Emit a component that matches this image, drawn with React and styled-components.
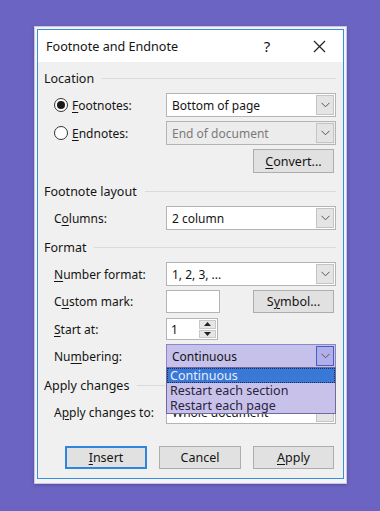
import React from "react";
import styled, { createGlobalStyle } from "styled-components";

const Global = createGlobalStyle`
  html, body { margin: 0; padding: 0; }
  body { background: #6c64c2; font-family: "Noto Sans", "Open Sans", Arial, sans-serif; }
`;

const Page = styled.div`
  width: 380px;
  height: 511px;
  background: #6c64c2;
  padding: 26px 0 0 34px;
  box-sizing: border-box;
`;

const Frame = styled.div`
  width: 313px;
  height: 458px;
  box-sizing: border-box;
  border: 1px solid #c9c7dc;
  background: #f4f4f4;
  padding: 2px 2px 4px 2px;
  box-shadow: 0 1px 3px rgba(40, 30, 90, 0.35);
`;

const Win = styled.div`
  height: 100%;
  box-sizing: border-box;
  border: 1px solid #3a8ee0;
  background: #f0f0f0;
  display: flex;
  flex-direction: column;
  color: #141414;
  font-size: 12px;
`;

const TitleBar = styled.div`
  height: 32px;
  background: #ffffff;
  display: flex;
  align-items: center;
  padding-left: 8px;
  padding-right: 2px;
  font-size: 12.6px;
  flex: none;
`;

const TitleText = styled.div`
  flex: 1;
`;

const TitleBtn = styled.div`
  width: ${(p) => p.$w}px;
  display: flex;
  justify-content: center;
  align-items: center;
  font-size: 15px;
`;

const Body = styled.div`
  padding: 8px 7px 0 6px;
  display: flex;
  flex-direction: column;
`;

const Header = styled.div`
  height: 16px;
  display: flex;
  align-items: center;
  gap: 8px;
  margin-top: ${(p) => p.$mt || 0}px;
  margin-bottom: 7px;
  font-size: 12.5px;
  &::after {
    content: "";
    flex: 1;
    height: 1px;
    background: #dadada;
  }
`;

const Row = styled.div`
  display: grid;
  grid-template-columns: 112px 1fr;
  align-items: center;
  height: ${(p) => p.$h || 24}px;
  margin-top: ${(p) => p.$mt || 0}px;
  padding-left: 10px;
`;

const Label = styled.div`
  display: flex;
  align-items: center;
  gap: 4px;
  white-space: nowrap;
`;

const U = styled.span`
  text-decoration: underline;
  text-underline-offset: 2px;
`;

const Radio = styled.span`
  width: 14px;
  height: 14px;
  box-sizing: border-box;
  border: 1px solid #333;
  border-radius: 50%;
  background: #fff;
  display: inline-flex;
  align-items: center;
  justify-content: center;
  &::after {
    content: "";
    width: 8px;
    height: 8px;
    border-radius: 50%;
    background: ${(p) => (p.$on ? "#1a1a1a" : "transparent")};
  }
`;

const SelectWrap = styled.div`
  position: relative;
  width: 170px;
  height: 24px;
`;

const Select = styled.div`
  height: 100%;
  box-sizing: border-box;
  border: 1px solid ${(p) => (p.$active ? "#8d88c4" : "#b4b4b4")};
  background: ${(p) => (p.$active ? "#c6c1ea" : p.$disabled ? "#ececec" : "#ffffff")};
  color: ${(p) => (p.$disabled ? "#7a7a7a" : "#141414")};
  display: flex;
  align-items: stretch;
  padding: 1px;
`;

const SelText = styled.div`
  flex: 1;
  display: flex;
  align-items: center;
  padding-left: 4px;
  white-space: nowrap;
  overflow: hidden;
`;

const Arrow = styled.div`
  width: 18px;
  box-sizing: border-box;
  border: 1px solid ${(p) => (p.$active ? "#3a64c8" : "#c4c4c4")};
  background: ${(p) => (p.$active ? "#b3aeea" : "#e4e4e4")};
  display: flex;
  align-items: center;
  justify-content: center;
`;

const Chevron = () => (
  <svg width="9" height="6" viewBox="0 0 9 6">
    <polyline points="0.5,0.8 4.5,4.8 8.5,0.8" fill="none" stroke="#555" strokeWidth="1" />
  </svg>
);

const DropList = styled.div`
  position: absolute;
  left: 0;
  top: 23px;
  width: 170px;
  box-sizing: border-box;
  border: 1px solid #6e6a9c;
  background: #c8c2ea;
  z-index: 2;
  padding: 0;
`;

const Item = styled.div`
  height: 15px;
  line-height: 15px;
  padding-left: 3px;
  font-size: 12.5px;
  background: ${(p) => (p.$sel ? "#3a78d6" : "transparent")};
  color: ${(p) => (p.$sel ? "#e8ecff" : "#2a2440")};
  outline: ${(p) => (p.$sel ? "1px dotted #1c2a60" : "none")};
  outline-offset: -1px;
`;

const Btn = styled.div`
  width: ${(p) => p.$w || 81}px;
  height: ${(p) => p.$h || 24}px;
  box-sizing: border-box;
  border: ${(p) => (p.$def ? "2px solid #2f86dd" : "1px solid #adadad")};
  background: #e1e1e1;
  display: flex;
  align-items: center;
  justify-content: center;
  font-size: 12.5px;
`;

const CtrlLine = styled.div`
  display: flex;
  align-items: center;
  justify-content: space-between;
  padding-right: 2px;
`;

const TextBox = styled.div`
  width: ${(p) => p.$w}px;
  height: ${(p) => p.$h}px;
  box-sizing: border-box;
  border: 1px solid #b4b4b4;
  background: #fff;
  display: flex;
  align-items: center;
  padding-left: 3px;
`;

const Spinner = styled.div`
  width: 52px;
  height: 22px;
  box-sizing: border-box;
  border: 1px solid #b4b4b4;
  background: #fff;
  display: flex;
`;

const SpinText = styled.div`
  flex: 1;
  display: flex;
  align-items: center;
  padding-left: 4px;
`;

const SpinBtns = styled.div`
  width: 17px;
  display: flex;
  flex-direction: column;
  padding: 1px 1px 1px 0;
  gap: 1px;
`;

const SpinBtn = styled.div`
  flex: 1;
  background: #e6e6e6;
  border: 1px solid #c8c8c8;
  display: flex;
  align-items: center;
  justify-content: center;
`;

const ButtonRow = styled.div`
  display: flex;
  gap: 12px;
  padding-left: 21px;
  margin-top: 22px;
`;

const Tri = ({ up }) => (
  <svg width="7" height="4" viewBox="0 0 7 4">
    <polygon points={up ? "0,4 7,4 3.5,0" : "0,0 7,0 3.5,4"} fill="#222" />
  </svg>
);

const Dropdown = ({ text, disabled, active, children }) => (
  <SelectWrap>
    <Select $disabled={disabled} $active={active}>
      <SelText>{text}</SelText>
      <Arrow $active={active}>
        <Chevron />
      </Arrow>
    </Select>
    {children}
  </SelectWrap>
);

export default function App() {
  return (
    <>
      <Global />
      <Page>
        <Frame>
          <Win>
            <TitleBar>
              <TitleText>Footnote and Endnote</TitleText>
              <TitleBtn $w={60}>?</TitleBtn>
              <TitleBtn $w={44}>
                <svg width="13" height="13" viewBox="0 0 13 13">
                  <path d="M1 1 L12 12 M12 1 L1 12" stroke="#222" strokeWidth="1.2" />
                </svg>
              </TitleBtn>
            </TitleBar>
            <Body>
              <Header>Location</Header>
              <Row>
                <Label>
                  <Radio $on />
                  <span>
                    <U>F</U>ootnotes:
                  </span>
                </Label>
                <Dropdown text="Bottom of page" />
              </Row>
              <Row $mt={4}>
                <Label>
                  <Radio />
                  <span>
                    <U>E</U>ndnotes:
                  </span>
                </Label>
                <Dropdown text="End of document" disabled />
              </Row>
              <Row $mt={4}>
                <div />
                <CtrlLine>
                  <div />
                  <Btn>
                    <span>
                      <U>C</U>onvert...
                    </span>
                  </Btn>
                </CtrlLine>
              </Row>
              <Header $mt={10}>Footnote layout</Header>
              <Row>
                <Label>
                  <span>
                    C<U>o</U>lumns:
                  </span>
                </Label>
                <Dropdown text="2 column" />
              </Row>
              <Header $mt={9}>Format</Header>
              <Row>
                <Label>
                  <span>
                    <U>N</U>umber format:
                  </span>
                </Label>
                <Dropdown text="1, 2, 3, ..." />
              </Row>
              <Row $mt={4} $h={23}>
                <Label>
                  <span>
                    C<U>u</U>stom mark:
                  </span>
                </Label>
                <CtrlLine>
                  <TextBox $w={54} $h={23} />
                  <Btn $h={23}>
                    <span>
                      S<U>y</U>mbol...
                    </span>
                  </Btn>
                </CtrlLine>
              </Row>
              <Row $mt={5} $h={22}>
                <Label>
                  <span>
                    <U>S</U>tart at:
                  </span>
                </Label>
                <Spinner>
                  <SpinText>1</SpinText>
                  <SpinBtns>
                    <SpinBtn>
                      <Tri up />
                    </SpinBtn>
                    <SpinBtn>
                      <Tri />
                    </SpinBtn>
                  </SpinBtns>
                </Spinner>
              </Row>
              <Row $mt={4}>
                <Label>
                  <span>
                    Nu<U>m</U>bering:
                  </span>
                </Label>
                <Dropdown text="Continuous" active>
                  <DropList>
                    <Item $sel>Continuous</Item>
                    <Item>Restart each section</Item>
                    <Item>Restart each page</Item>
                  </DropList>
                </Dropdown>
              </Row>
              <Header $mt={9}>Apply changes</Header>
              <Row>
                <Label>
                  <span>
                    A<U>p</U>ply changes to:
                  </span>
                </Label>
                <Dropdown text="Whole document" />
              </Row>
              <ButtonRow>
                <Btn $def $w={82} $h={23}>
                  <span>
                    <U>I</U>nsert
                  </span>
                </Btn>
                <Btn $w={82} $h={23}>Cancel</Btn>
                <Btn $w={81} $h={23}>
                  <span>
                    <U>A</U>pply
                  </span>
                </Btn>
              </ButtonRow>
            </Body>
          </Win>
        </Frame>
      </Page>
    </>
  );
}
